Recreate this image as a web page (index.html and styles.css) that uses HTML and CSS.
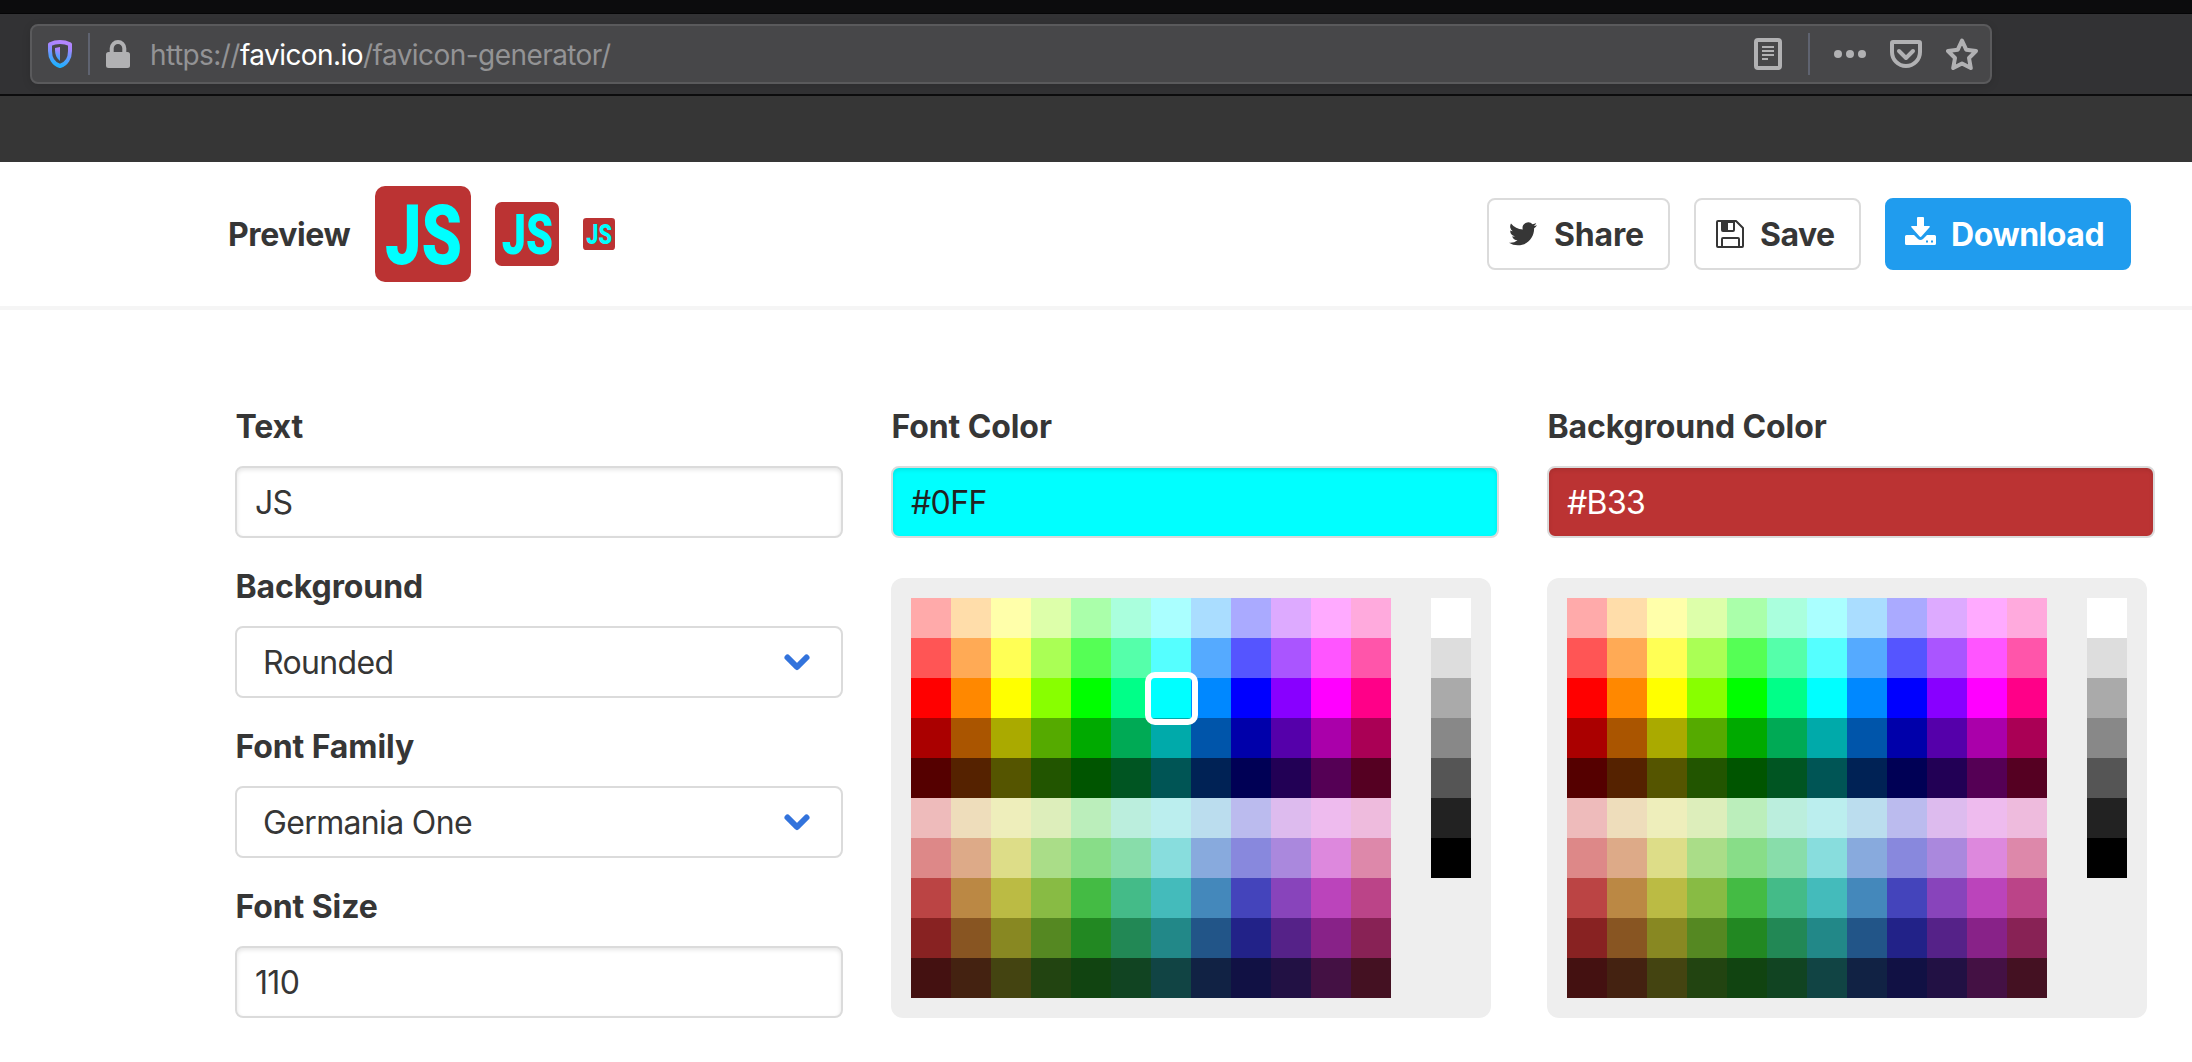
FILE: index.html
```html
<!DOCTYPE html>
<html lang="en">
<head>
<meta charset="utf-8">
<title>Favicon Generator</title>
<link rel="stylesheet" href="styles.css">
</head>
<body>
<div class="browser">
  <div class="tabstrip"></div>
  <div class="toolbar">
    <div class="urlbar">
      <svg class="shield" width="24" height="28" viewBox="0 0 24 28"><defs><linearGradient id="sg" x1="0.6" y1="0" x2="0.4" y2="1"><stop offset="0" stop-color="#b486ff"/><stop offset="0.2" stop-color="#a785ff"/><stop offset="0.6" stop-color="#5e9bff"/><stop offset="1" stop-color="#1fb0ff"/></linearGradient></defs><path fill="none" stroke="url(#sg)" stroke-width="4" stroke-linejoin="round" d="M2 4.2C5 2.8 8.500 2 12 2s7 .8 10 2.200V11c0 7-3.500 13-10 15C5.500 24 2 18 2 11z"/><path fill="url(#sg)" d="M12 7v14C8.500 18.500 7 14.500 7 10V8z"/></svg>
      <span class="divider"></span>
      <svg class="lock" width="24" height="28" viewBox="0 0 24 28"><rect y="12" width="24" height="16" rx="2.500" fill="#b1b1b3"/><path fill="none" stroke="#b1b1b3" stroke-width="4" d="M5.700 13V8.300a6.300 6.300 0 0 1 12.600 0V13"/></svg>
      <div class="url">https://<b>favicon.io</b>/favicon-generator/</div>
      <div class="actions">
        <svg width="28" height="32" viewBox="0 0 28 32"><rect x="2" y="2" width="24" height="28" rx="2" fill="none" stroke="#b1b1b3" stroke-width="4"/><path stroke="#b1b1b3" stroke-width="2" d="M8 9h12M8 13h12M8 17h12M8 21h6"/></svg>
        <span class="divider"></span>
        <svg width="32" height="32" viewBox="0 0 32 32" fill="#b1b1b3"><circle cx="4" cy="16" r="4"/><circle cx="16" cy="16" r="4"/><circle cx="28" cy="16" r="4"/></svg>
        <svg width="32" height="32" viewBox="0 0 32 32" fill="none" stroke="#b1b1b3" stroke-width="4" stroke-linejoin="round" stroke-linecap="round"><path d="M2 5a1 1 0 0 1 1-1h26a1 1 0 0 1 1 1v9a14 14 0 0 1-28 0z"/><path d="M9 13l7 7 7-7"/></svg>
        <svg width="32" height="32" viewBox="0 0 32 32" fill="none" stroke="#b1b1b3" stroke-width="4" stroke-linejoin="round"><path d="M16 2.500l4.200 9.200 9.800 1.300-7 7 1.800 10L16 25.400 7.200 30 9 20l-7-7 9.800-1.300z"/></svg>
      </div>
    </div>
  </div>
  <div class="sitebar"></div>
</div>

<header class="header">
  <div class="preview">
    <span class="preview-title">Preview</span>
    <svg class="fav fav-lg" viewBox="0 0 96 96"><rect width="96" height="96" rx="10"/><text x="10" y="78" textLength="77" lengthAdjust="spacingAndGlyphs">JS</text></svg>
    <svg class="fav fav-md" viewBox="0 0 96 96"><rect width="96" height="96" rx="10"/><text x="10" y="78" textLength="77" lengthAdjust="spacingAndGlyphs">JS</text></svg>
    <svg class="fav fav-sm" viewBox="0 0 96 96"><rect width="96" height="96" rx="10"/><text x="10" y="78" textLength="77" lengthAdjust="spacingAndGlyphs">JS</text></svg>
  </div>
  <div class="buttons">
    <button class="btn share"><svg width="28" height="24" viewBox="0 0 24 20"><path fill="#363636" d="M24 2.400a9.800 9.800 0 0 1-2.800.8A4.900 4.900 0 0 0 23.300.5a9.900 9.900 0 0 1-3.100 1.200 4.900 4.900 0 0 0-8.400 4.500A14 14 0 0 1 1.700 1a4.900 4.900 0 0 0 1.500 6.600A4.900 4.900 0 0 1 1 7v.1a4.900 4.900 0 0 0 4 4.800 4.900 4.900 0 0 1-2.300.1 4.900 4.900 0 0 0 4.600 3.400A9.900 9.900 0 0 1 0 17.500a14 14 0 0 0 7.500 2.200c9.100 0 14-7.500 14-14v-.7A10 10 0 0 0 24 2.400z"/></svg><span>Share</span></button>
    <button class="btn save"><svg width="28" height="28" viewBox="0 0 28 28"><path fill="none" stroke="#363636" stroke-width="2" stroke-linejoin="round" d="M2 1h18l7 7v18a1 1 0 0 1-1 1H2a1 1 0 0 1-1-1V2a1 1 0 0 1 1-1z"/><path fill="#363636" fill-rule="evenodd" d="M5 1h14v9q0 2-2 2H7q-2 0-2-2zM12 3v7h5V3z"/><path fill="none" stroke="#363636" stroke-width="2" d="M6 27v-8q0-1 1-1h15q1 0 1 1v8"/></svg><span>Save</span></button>
    <button class="btn download"><svg width="31" height="28" viewBox="0 0 31 28"><path fill="#fff" d="M13 0h5q1 0 1 1v8h5q1.500 0 .6 1.300l-8 9q-1.100 1.200-2.200 0l-8-9Q5.500 9 7 9h5V1q0-1 1-1z"/><path fill="#fff" fill-rule="evenodd" d="M1.500 18H9l4 4q2.500 2 5 0l4-4h7.500q1.500 0 1.500 1.500v7q0 1.500-1.500 1.500h-28Q0 28 0 26.500v-7Q0 18 1.500 18zM21 23.500v2h2v-2zM26 23.500v2h2v-2z"/></svg><span>Download</span></button>
  </div>
</header>

<main class="columns">
  <section class="column">
    <label class="label">Text</label>
    <div class="input">JS</div>
    <label class="label">Background</label>
    <div class="input select"><span>Rounded</span><svg width="28" height="20" viewBox="0 0 28 20"><path d="M4.500 4.500L14 14l9.500-9.500"/></svg></div>
    <label class="label">Font Family</label>
    <div class="input select"><span>Germania One</span><svg width="28" height="20" viewBox="0 0 28 20"><path d="M4.500 4.500L14 14l9.500-9.500"/></svg></div>
    <label class="label">Font Size</label>
    <div class="input">110</div>
  </section>
  <section class="column">
    <label class="label">Font Color</label>
    <div class="input cyan">#0FF</div>
    <div class="picker" data-selected="#0ff"></div>
  </section>
  <section class="column">
    <label class="label">Background Color</label>
    <div class="input red">#B33</div>
    <div class="picker"></div>
  </section>
</main>
<script src="app.js"></script>
</body>
</html>
```
FILE: styles.css
```css
*, *::after { box-sizing: border-box; }
body { margin: 0; width: 2192px; height: 1062px; overflow: hidden; background: #fff; color: #363636; font: 400 32px/48px Inter, "Liberation Sans", sans-serif; }
svg { display: block; flex: none; }
.tabstrip { height: 14px; background: #0c0c0d; border-bottom: 1px solid #050506; }
.toolbar { height: 82px; padding: 10px 0 0 30px; background: #323234; border-bottom: 2px solid #0c0c0d; }
.urlbar { display: flex; align-items: center; width: 1962px; height: 60px; padding: 0 12px 0 16px; background: #474749; border: 2px solid #5a5a5c; border-radius: 8px; box-shadow: 0 2px 8px rgba(0,0,0,.12); }
.divider { width: 2px; height: 42px; background: #5f6370; }
.shield { margin-right: 16px; }
.lock { margin-left: 16px; }
.url { flex: 1; margin-left: 20px; padding-top: 2px; font-size: 28px; line-height: 40px; letter-spacing: -.56px; color: #939395; white-space: nowrap; }
.url b { font-weight: 400; color: #fff; }
.actions { display: flex; align-items: center; gap: 24px; }
.actions .divider { margin: 0 0 0 2px; }
.sitebar { height: 66px; background: #363636; }
.header { display: flex; align-items: center; justify-content: space-between; height: 148px; padding: 0 61px 0 228px; border-bottom: 4px solid #f5f5f5; }
.preview { display: flex; align-items: center; gap: 24px; }
.preview-title { width: 123px; padding-top: 2px; font-weight: 700; letter-spacing: -.4px; }
.fav { overflow: visible; }
.fav-lg { width: 96px; height: 96px; }
.fav-md { width: 64px; height: 64px; }
.fav-sm { width: 32px; height: 32px; }
.fav rect { fill: #b33; }
.fav text { fill: #0ff; font: 900 83px Roboto, sans-serif; }
.buttons { display: flex; gap: 24px; }
.btn { display: flex; align-items: center; height: 72px; padding: 0 0 0 20px; background: #fff; border: 2px solid #dbdbdb; border-radius: 8px; color: #363636; font: 700 32px/48px Inter, sans-serif; letter-spacing: -.5px; white-space: nowrap; }
.btn span { margin-left: 17px; padding-top: 2px; }
.share { width: 183px; letter-spacing: -.15px; }
.save { width: 167px; }
.save span { margin-left: 16px; }
.download { width: 246px; padding-left: 18px; background: #209cee; border-color: #209cee; color: #fff; letter-spacing: -.45px; }
.download span { margin-left: 15px; }
.btn svg { margin-top: -1px; }
.download svg { margin-top: -6px; }
.columns { display: grid; grid-template-columns: repeat(3, 608px); gap: 48px; padding: 92px 0 0 235px; }
.column { display: flex; flex-direction: column; }
.label { height: 48px; margin-bottom: 16px; padding: 1px 0 0 .5px; font-weight: 700; letter-spacing: -.1px; white-space: nowrap; }
.input { height: 72px; margin-bottom: 24px; padding: 11px 18px 9px; border: 2px solid #dbdbdb; border-radius: 8px; box-shadow: inset 0 2px 4px rgba(10,10,10,.1); letter-spacing: -.65px; }
.select { display: flex; justify-content: space-between; align-items: center; padding: 11px 30px 9px 26px; box-shadow: none; }
.select path { fill: none; stroke: #3273dc; stroke-width: 6; stroke-linecap: round; stroke-linejoin: round; }
.cyan { background: #0ff; color: #222; }
.red { background: #b33; color: #fff; }
.picker { display: flex; justify-content: space-between; align-items: flex-start; width: 600px; height: 440px; margin-top: 16px; padding: 20px; background: #eee; border-radius: 12px; }
.swatches { display: grid; grid-template-columns: repeat(12, 40px); grid-auto-rows: 40px; }
.grays { display: grid; grid-template-columns: 40px; grid-auto-rows: 40px; }
.selected { position: relative; }
.selected::after { content: ""; position: absolute; z-index: 1; left: -6px; top: -6px; width: 53px; height: 53px; border: 6px solid #fff; border-radius: 10px; }
```
FILE: app.js
```js
const palette = [
  'faa fda ffa dfa afa afd aff adf aaf daf faf fad',
  'f55 fa5 ff5 af5 5f5 5fa 5ff 5af 55f a5f f5f f5a',
  'f00 f80 ff0 8f0 0f0 0f8 0ff 08f 00f 80f f0f f08',
  'a00 a50 aa0 5a0 0a0 0a5 0aa 05a 00a 50a a0a a05',
  '500 520 550 250 050 052 055 025 005 205 505 502',
  'ebb edb eeb deb beb bed bee bde bbe dbe ebe ebd',
  'd88 da8 dd8 ad8 8d8 8da 8dd 8ad 88d a8d d8d d8a',
  'b44 b84 bb4 8b4 4b4 4b8 4bb 48b 44b 84b b4b b48',
  '822 852 882 582 282 285 288 258 228 528 828 825',
  '411 421 441 241 141 142 144 124 114 214 414 412'
].join(' ').split(' ');
const grays = 'fff ddd aaa 888 555 222 000'.split(' ');

function build(className, colors, selected) {
  const grid = document.createElement('div');
  grid.className = className;
  for (const c of colors) {
    const cell = document.createElement('div');
    cell.style.background = '#' + c;
    if ('#' + c === selected) cell.className = 'selected';
    grid.append(cell);
  }
  return grid;
}

for (const picker of document.querySelectorAll('.picker')) {
  picker.append(build('swatches', palette, picker.dataset.selected), build('grays', grays));
}
```
